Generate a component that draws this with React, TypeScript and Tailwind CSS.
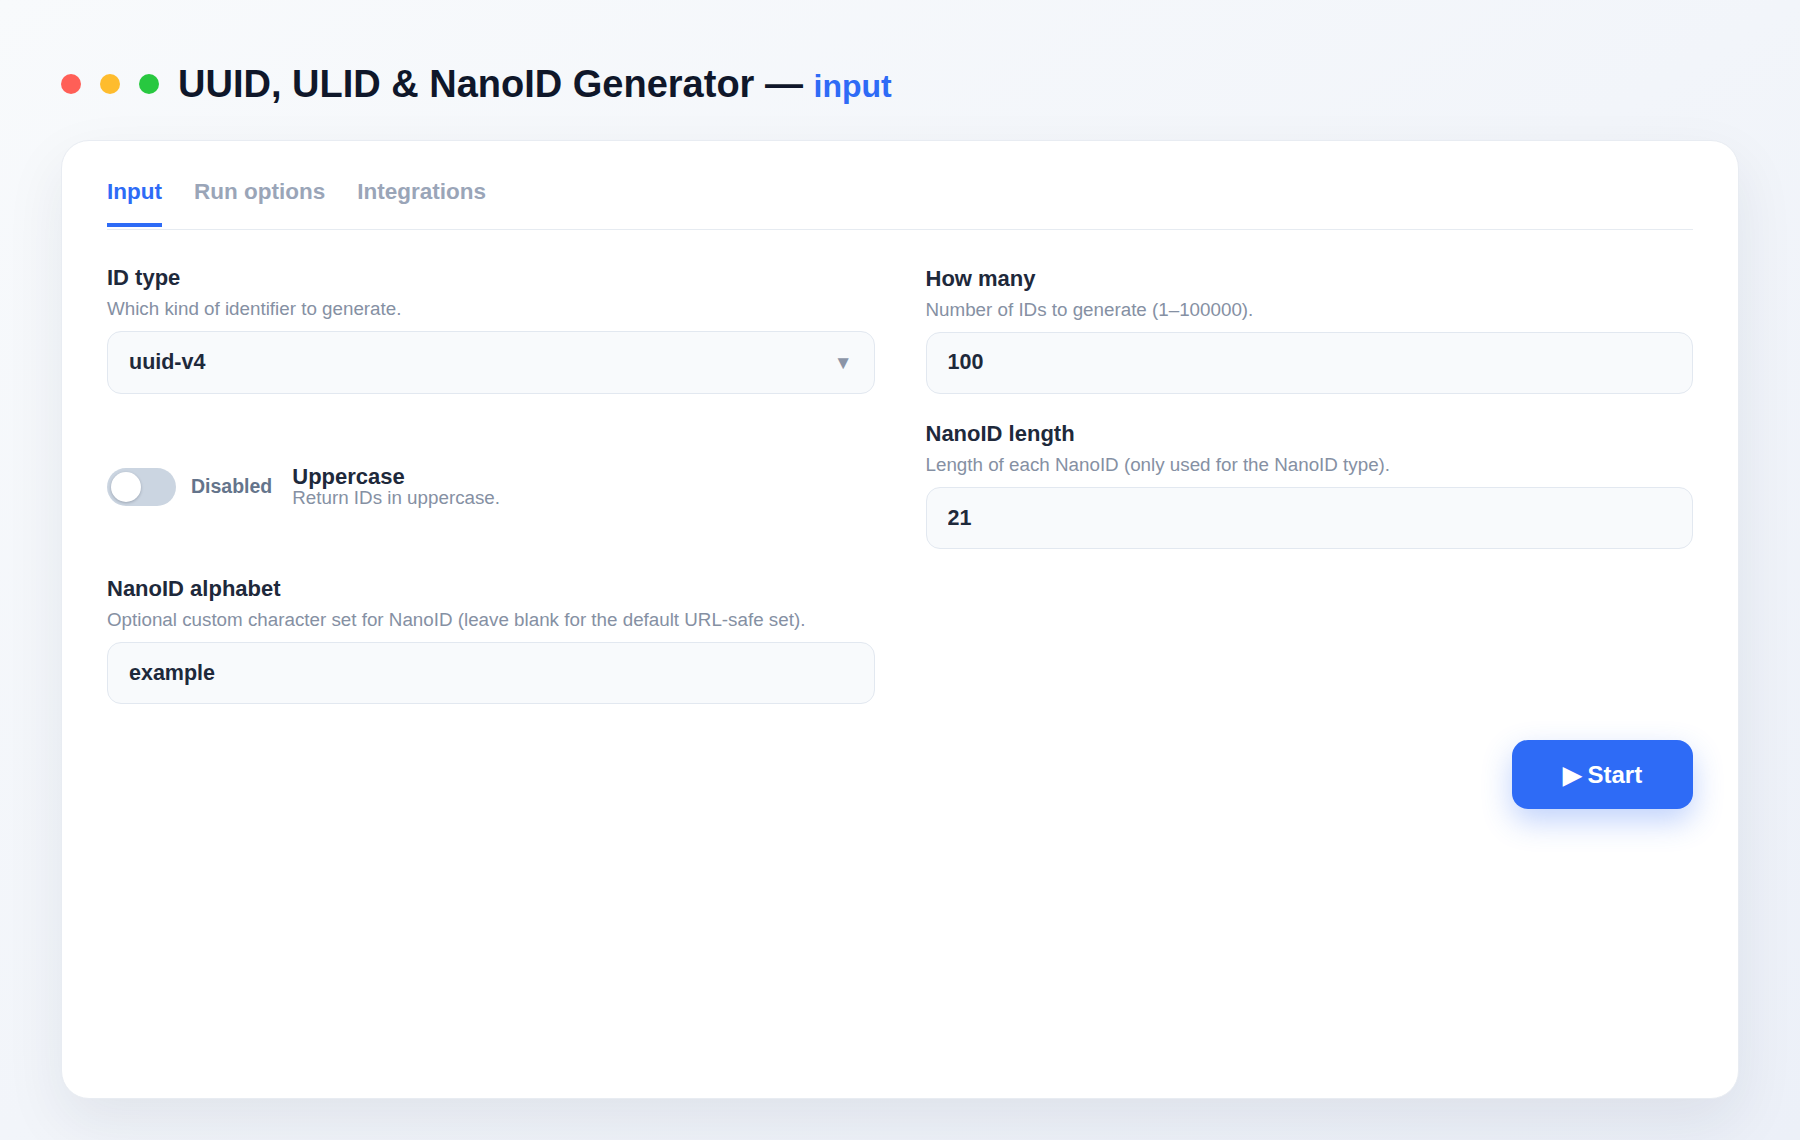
import { useState } from 'react';

const font = { fontFamily: '"Liberation Sans", Arial, sans-serif' };

type Tab = 'input' | 'run' | 'integrations';

function Field({
  label,
  hint,
  children,
}: {
  label: string;
  hint: string;
  children: React.ReactNode;
}) {
  return (
    <div className="flex flex-col">
      <div className="text-[22px] leading-[26px] font-bold text-[#1e293b]">{label}</div>
      <div className="mt-[7px] mb-[11px] text-[18.8px] leading-[22px] text-[#8590a3]">{hint}</div>
      {children}
    </div>
  );
}

function TextBox({ value, onChange }: { value: string; onChange: (v: string) => void }) {
  return (
    <input
      value={value}
      onChange={(e) => onChange(e.target.value)}
      className="h-[62px] w-full rounded-[14px] border-[1.5px] border-[#e2e8f0] bg-[#f8fafc] px-[21px] text-[21.5px] font-bold text-[#1e293b] outline-none"
      style={font}
    />
  );
}

export default function App() {
  const [tab, setTab] = useState<Tab>('input');
  const [idType, setIdType] = useState('uuid-v4');
  const [count, setCount] = useState('100');
  const [length, setLength] = useState('21');
  const [alphabet, setAlphabet] = useState('example');
  const [upper, setUpper] = useState(false);

  const tabs: { key: Tab; label: string }[] = [
    { key: 'input', label: 'Input' },
    { key: 'run', label: 'Run options' },
    { key: 'integrations', label: 'Integrations' },
  ];

  return (
    <div
      className="min-h-[1140px] bg-gradient-to-br from-[#f8fafc] to-[#ecf0f8] px-[61px] pt-[61px] pb-[41px]"
      style={font}
    >
      {/* header */}
      <div className="flex h-[46px] items-center">
        <div className="flex items-center gap-[19px]">
          <span className="h-[20px] w-[20px] rounded-full bg-[#ff5f57]" />
          <span className="h-[20px] w-[20px] rounded-full bg-[#febc2e]" />
          <span className="h-[20px] w-[20px] rounded-full bg-[#28c840]" />
        </div>
        <h1 className="ml-[19px] text-[38px] leading-[46px] font-bold text-[#0f172a]">
          UUID, ULID &amp; NanoID Generator —{' '}
          <span className="text-[32px] leading-none font-semibold text-[#2e6bf6]">input</span>
        </h1>
      </div>

      {/* card */}
      <div className="mt-[33px] flex h-[959px] flex-col rounded-[28px] border border-[#e8ecf2] bg-white px-[45px] pt-[38px] shadow-[0_24px_60px_rgba(30,41,59,0.08)]">
        <div className="flex gap-[32px] border-b border-[#e6ebf1] pb-[2px]">
          {tabs.map((t) => (
            <button
              key={t.key}
              onClick={() => setTab(t.key)}
              className={
                t.key === tab
                  ? 'border-b-4 border-[#2e6bf6] pb-[18px] text-[22.5px] leading-[26px] font-bold text-[#2e6bf6]'
                  : 'border-b-4 border-transparent pb-[18px] text-[22.5px] leading-[26px] font-bold text-[#9aa5b8]'
              }
              style={font}
            >
              {t.label}
            </button>
          ))}
        </div>

        <div className="mt-[35px] grid grid-cols-2 items-center gap-x-[51px] gap-y-[27px]">
          <Field label="ID type" hint="Which kind of identifier to generate.">
            <div className="relative">
              <select
                value={idType}
                onChange={(e) => setIdType(e.target.value)}
                className="h-[63px] w-full appearance-none rounded-[14px] border-[1.5px] border-[#e2e8f0] bg-[#f8fafc] px-[21px] text-[21.5px] font-bold text-[#1e293b] outline-none"
                style={font}
              >
                <option value="uuid-v4">uuid-v4</option>
                <option value="uuid-v7">uuid-v7</option>
                <option value="ulid">ulid</option>
                <option value="nanoid">nanoid</option>
              </select>
              <span className="pointer-events-none absolute top-1/2 right-[22px] -translate-y-1/2 text-[19px] text-[#8b95a7]">
                ▼
              </span>
            </div>
          </Field>

          <Field label="How many" hint="Number of IDs to generate (1–100000).">
            <TextBox value={count} onChange={setCount} />
          </Field>

          <div className="mt-[4px] flex items-center">
            <button
              onClick={() => setUpper(!upper)}
              className={
                upper
                  ? 'relative h-[38px] w-[69px] rounded-full bg-[#2e6bf6]'
                  : 'relative h-[38px] w-[69px] rounded-full bg-[#cbd5e1]'
              }
            >
              <span
                className={
                  upper
                    ? 'absolute top-[4px] left-[35px] h-[30px] w-[30px] rounded-full bg-white shadow-[0_1px_3px_rgba(15,23,42,0.25)]'
                    : 'absolute top-[4px] left-[4px] h-[30px] w-[30px] rounded-full bg-white shadow-[0_1px_3px_rgba(15,23,42,0.25)]'
                }
              />
            </button>
            <span className="ml-[15px] text-[19.5px] font-bold text-[#64748b]">
              {upper ? 'Enabled' : 'Disabled'}
            </span>
            <div className="ml-[20px] flex flex-col">
              <span className="text-[22px] leading-[22px] font-bold text-[#1e293b]">Uppercase</span>
              <span className="text-[18.8px] leading-[20px] text-[#8590a3]">Return IDs in uppercase.</span>
            </div>
          </div>

          <Field label="NanoID length" hint="Length of each NanoID (only used for the NanoID type).">
            <TextBox value={length} onChange={setLength} />
          </Field>

          <Field
            label="NanoID alphabet"
            hint="Optional custom character set for NanoID (leave blank for the default URL-safe set)."
          >
            <TextBox value={alphabet} onChange={setAlphabet} />
          </Field>
        </div>

        <div className="mt-[36px] flex justify-end">
          <button
            className="h-[69px] w-[181px] rounded-[16px] bg-[#2e6bf6] text-[24px] font-bold text-white shadow-[0_12px_30px_rgba(46,107,246,0.3)]"
            style={font}
          >
            ▶ Start
          </button>
        </div>
      </div>
    </div>
  );
}
